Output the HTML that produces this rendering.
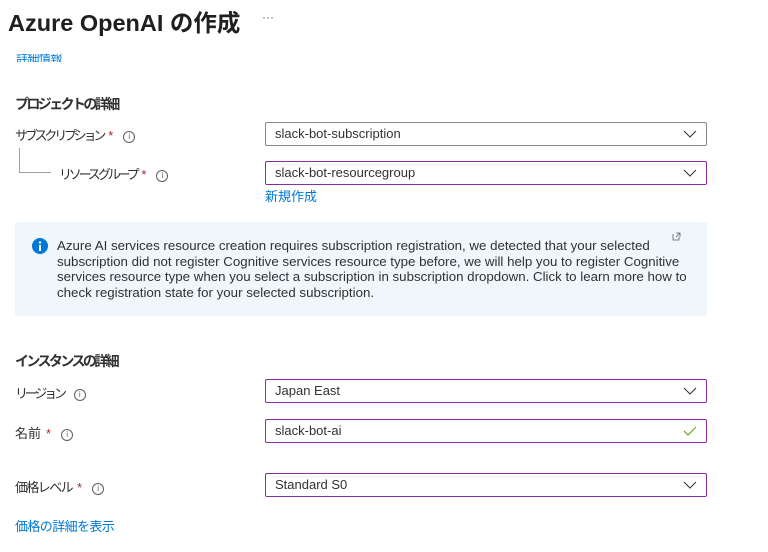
<!DOCTYPE html>
<html><head><meta charset="utf-8"><style>
*{margin:0;padding:0;box-sizing:border-box}
body{width:768px;height:552px;background:#fff;font-family:"Liberation Sans","Noto Sans CJK JP",sans-serif;color:#323130;position:relative;overflow:hidden;font-size:13px}
.a{position:absolute;white-space:nowrap}
.box{position:absolute;left:265px;width:442px;height:24px;border:1px solid #8a2da5;border-radius:2px;padding-left:9px;line-height:22px;font-size:13px}
.chev{position:absolute;right:9px;top:7px}
.i{display:inline-block;width:12px;height:12px;border:1px solid #605e5c;border-radius:50%;font-size:8px;line-height:10px;text-align:center;color:#605e5c;vertical-align:middle;margin-left:10px;letter-spacing:0}
.st{color:#a4262c;letter-spacing:0;margin-left:5px}
.lnk{color:#0078d4}
.k{letter-spacing:-3.2px}
</style></head><body>
<div class="a" style="left:8px;top:4px;font-size:23.5px;font-weight:bold;color:#201f1e">Azure OpenAI の作成</div>
<div class="a" style="left:262px;top:10px;font-size:12px;color:#605e5c">···</div>
<div class="a lnk" style="left:16px;top:54px;font-size:12px;height:8px;overflow:hidden;line-height:8px;letter-spacing:-0.5px">詳細情報</div>
<div class="a" style="left:15px;top:94px;font-size:14px;font-weight:bold;letter-spacing:-2.6px">プロジェクトの詳細</div>
<div class="a" style="left:15px;top:125px"><span class="k">サブスクリプション</span><span class="st">*</span><span class="i">i</span></div>
<div style="position:absolute;left:19px;top:148px;width:32px;height:25px;border-left:1px solid #a19f9d;border-bottom:1px solid #a19f9d"></div>
<div class="a" style="left:59px;top:164px"><span class="k">リソース グループ</span><span class="st">*</span><span class="i">i</span></div>
<div class="box" style="top:122px;border-color:#8a8886">slack-bot-subscription<svg class="chev" width="14" height="8"><path d="M1 1l6 6 6-6" fill="none" stroke="#323130"/></svg></div>
<div class="box" style="top:161px">slack-bot-resourcegroup<svg class="chev" width="14" height="8"><path d="M1 1l6 6 6-6" fill="none" stroke="#323130"/></svg></div>
<div class="a lnk" style="left:265px;top:186px">新規作成</div>
<div style="position:absolute;left:15px;top:222px;width:692px;height:94px;background:#eff6fc"></div>
<svg class="a" style="left:32px;top:238px" width="16" height="16"><circle cx="8" cy="8" r="8" fill="#0078d4"/><rect x="7" y="7" width="2" height="6" fill="#fff"/><circle cx="8" cy="4.5" r="1.2" fill="#fff"/></svg>
<svg class="a" style="left:672px;top:232px" width="9" height="9"><path d="M1 2v6h6V5M4 1h4v4M8 1L4 5" fill="none" stroke="#605e5c" stroke-width=".8"/></svg>
<div class="a" style="left:57px;top:238px;font-size:13.3px;line-height:15.5px;color:#323130">Azure AI services resource creation requires subscription registration, we detected that your selected<br>subscription did not register Cognitive services resource type before, we will help you to register Cognitive<br>services resource type when you select a subscription in subscription dropdown. Click to learn more how to<br>check registration state for your selected subscription.</div>
<div class="a" style="left:15px;top:351px;font-size:14px;font-weight:bold;letter-spacing:-2.6px">インスタンスの詳細</div>
<div class="a" style="left:15px;top:383px"><span class="k">リージョン</span><span class="i">i</span></div>
<div class="a" style="left:15px;top:423px">名前<span class="st">*</span><span class="i">i</span></div>
<div class="a" style="left:15px;top:477px"><span style="letter-spacing:-1.6px">価格レベル</span><span class="st">*</span><span class="i">i</span></div>
<div class="box" style="top:379px">Japan East<svg class="chev" width="14" height="8"><path d="M1 1l6 6 6-6" fill="none" stroke="#323130"/></svg></div>
<div class="box" style="top:419px">slack-bot-ai<svg class="chev" style="top:6px" width="14" height="10"><path d="M1 5l4 4 8-8" fill="none" stroke="#57a300"/></svg></div>
<div class="box" style="top:473px">Standard S0<svg class="chev" width="14" height="8"><path d="M1 1l6 6 6-6" fill="none" stroke="#323130"/></svg></div>
<div class="a lnk" style="left:15px;top:516px;letter-spacing:-0.6px">価格の詳細を表示</div>
</body></html>
